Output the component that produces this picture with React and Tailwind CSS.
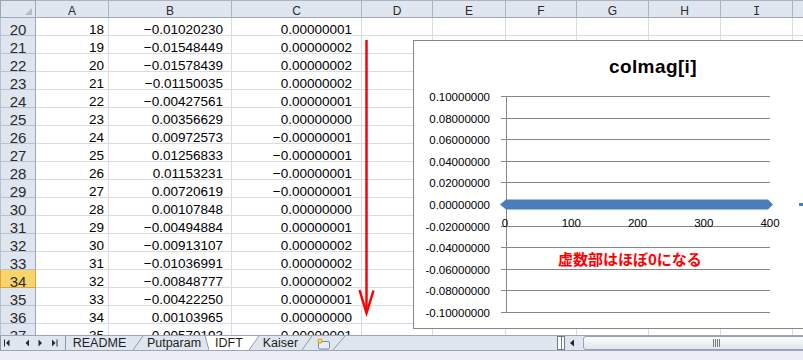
import React from "react";

const ROWS = [
  [20, "18", "−0.01020230", "0.00000001"],
  [21, "19", "−0.01548449", "0.00000002"],
  [22, "20", "−0.01578439", "0.00000002"],
  [23, "21", "−0.01150035", "0.00000002"],
  [24, "22", "−0.00427561", "0.00000001"],
  [25, "23", "0.00356629", "0.00000000"],
  [26, "24", "0.00972573", "−0.00000001"],
  [27, "25", "0.01256833", "−0.00000001"],
  [28, "26", "0.01153231", "−0.00000001"],
  [29, "27", "0.00720619", "−0.00000001"],
  [30, "28", "0.00107848", "0.00000000"],
  [31, "29", "−0.00494884", "0.00000001"],
  [32, "30", "−0.00913107", "0.00000002"],
  [33, "31", "−0.01036991", "0.00000002"],
  [34, "32", "−0.00848777", "0.00000002"],
  [35, "33", "−0.00422250", "0.00000001"],
  [36, "34", "0.00103965", "0.00000000"],
  [37, "35", "0.00570193", "−0.00000001"],
];

const HEAD = [
  ["A", "w-[73px]"],
  ["B", "w-[123px]"],
  ["C", "w-[130px]"],
  ["D", "w-[71px]"],
  ["E", "w-[73px]"],
  ["F", "w-[71px]"],
  ["G", "w-[72px]"],
  ["H", "w-[72px]"],
  ["I", "w-[72px]"],
  ["J", "w-[72px]"],
];

const EMPTY = ["w-[71px]", "w-[73px]", "w-[71px]", "w-[72px]", "w-[72px]", "w-[72px]", "w-[72px]"];

const YL = [
  "0.10000000",
  "0.08000000",
  "0.06000000",
  "0.04000000",
  "0.02000000",
  "0.00000000",
  "-0.02000000",
  "-0.04000000",
  "-0.06000000",
  "-0.08000000",
  "-0.10000000",
];
const gy = (i) => Math.round(96 + i * 21.6) - 41 + 0.5;

function Slant({ fill }) {
  return (
    <svg width="10" height="14" className="shrink-0 block">
      {fill === "left" && <polygon points="0,0 10,0 0,14" fill="#ffffff" />}
      <line x1="0" y1="14" x2="10" y2="0" stroke="#8e99a8" strokeWidth="1" />
    </svg>
  );
}

function Chart() {
  return (
    <div className="absolute left-[413px] top-[40px] w-[480px] h-[289px] border border-[#868686] bg-white">
      <svg width="478" height="287" className="absolute left-0 top-0 block">
        {YL.map((t, i) => (
          <g key={t}>
            <line x1="87" x2="356" y1={gy(i)} y2={gy(i)} stroke="#868686" strokeWidth="1" />
            <text
              x="76"
              y={gy(i) + 4.5}
              textAnchor="end"
              fontSize="11.5"
              fontFamily="Liberation Sans, Arial, sans-serif"
              fill="#000"
            >
              {t}
            </text>
          </g>
        ))}
        <line x1="92.5" x2="92.5" y1={gy(0)} y2={gy(10)} stroke="#868686" strokeWidth="1" />
        <polygon
          points="86,163.5 92,158.5 354,158.5 359,163.5 354,168.5 92,168.5"
          fill="#4a7ebb"
        />
        <rect x="385" y="162" width="4" height="3" fill="#4a7ebb" />
        {[["0", 91], ["100", 157.25], ["200", 223.5], ["300", 289.75], ["400", 356]].map(([t, x]) => (
          <text
            key={t}
            x={x}
            y="186"
            textAnchor="middle"
            fontSize="11.5"
            fontFamily="Liberation Sans, Arial, sans-serif"
            fill="#000"
          >
            {t}
          </text>
        ))}
      </svg>
      <div className="absolute left-0 right-0 top-[16px] text-center text-[19px] leading-[19px] font-bold tracking-[0.4px] text-black">
        colmag[i]
      </div>
      <div className="absolute left-[144px] top-[210px] whitespace-nowrap text-[15px] leading-[15px] font-bold text-[#ff0000] font-['Noto_Sans_CJK_JP',sans-serif]">
        虚数部はほぼ0になる
      </div>
    </div>
  );
}

export default function App() {
  return (
    <div className="relative w-[803px] h-[360px] overflow-hidden bg-white font-['Liberation_Sans',Arial,sans-serif] text-black">
      <div className="h-[335px] overflow-hidden">
        {/* column header */}
        <div className="flex">
          <div className="w-[36px] h-[18px] shrink-0 border-t border-l border-b border-r border-[#9ba7b7] bg-[#dfe6ef]">
            <svg width="34" height="16" className="block">
              <polygon points="31,7 31,14 24,14" fill="#b3bcc8" />
            </svg>
          </div>
          {HEAD.map(([l, w]) => (
            <div
              key={l}
              className={`${w} h-[18px] shrink-0 border-t border-r border-b border-[#a9b5c4] border-b-[#9ba7b7] bg-[#dfe6ef] text-center text-[12px] leading-[12px] pt-[4px] text-[#2b2b2b]`}
            >
              {l === "I" ? <span className="font-['Liberation_Mono',monospace]">I</span> : l}
            </div>
          ))}
        </div>
        {ROWS.map(([r, a, b, c]) => (
          <div key={r} className="flex">
            <div
              className={
                r === 34
                  ? "w-[36px] h-[18px] shrink-0 border-l border-r border-b border-[#e2a13a] bg-[#f8d56c] text-center text-[15px] leading-[10px] pt-[7px] text-[#2b2b2b]"
                  : "w-[36px] h-[18px] shrink-0 border-l border-r border-b border-[#b6c2d1] border-r-[#9ba7b7] bg-[#dfe6ef] text-center text-[15px] leading-[10px] pt-[7px] text-[#2b2b2b]"
              }
            >
              {r}
            </div>
            <div className="w-[73px] h-[18px] shrink-0 border-r border-b border-[#d9dce1] text-right text-[13.5px] leading-[10px] pt-[7px] pr-[4px]">
              {a}
            </div>
            <div className="w-[123px] h-[18px] shrink-0 border-r border-b border-[#d9dce1] text-right text-[13.5px] leading-[10px] pt-[7px] pr-[8px]">
              {b}
            </div>
            <div className="w-[130px] h-[18px] shrink-0 border-r border-b border-[#d9dce1] text-right text-[13.5px] leading-[10px] pt-[7px] pr-[9px]">
              {c}
            </div>
            {EMPTY.map((w, i) => (
              <div key={i} className={`${w} h-[18px] shrink-0 border-r border-b border-[#d9dce1]`} />
            ))}
          </div>
        ))}
      </div>

      {/* tab bar */}
      <div className="flex h-[16px] border-t border-b border-[#9ba7b7] bg-[#dfe6ef] text-[12.5px] leading-[14px] text-[#1e1e1e] whitespace-nowrap">
        <div className="w-[66px] shrink-0 border-l border-r border-[#8e99a8]">
          <svg width="64" height="14" className="block">
            <rect x="3" y="3.5" width="1" height="7" fill="#2a2a2a" />
            <polygon points="8.5,3.5 5,7 8.5,10.5" fill="#2a2a2a" />
            <polygon points="28,3.5 24.5,7 28,10.5" fill="#2a2a2a" />
            <polygon points="37.5,3.5 41,7 37.5,10.5" fill="#2a2a2a" />
            <polygon points="51,3.5 54.5,7 51,10.5" fill="#2a2a2a" />
            <rect x="55.5" y="3.5" width="1" height="7" fill="#2a2a2a" />
          </svg>
        </div>
        <div className="w-[67px] shrink-0 text-center">README</div>
        <Slant />
        <div className="w-[62px] shrink-0 text-center">Putparam</div>
        <svg width="4" height="14" className="shrink-0 block">
          <polygon points="0,0 4,0 4,14" fill="#ffffff" />
          <line x1="0" y1="0" x2="4" y2="14" stroke="#8e99a8" strokeWidth="1" />
        </svg>
        <div className="w-[40px] shrink-0 text-center bg-white">IDFT</div>
        <Slant fill="left" />
        <div className="w-[43px] shrink-0 text-center">Kaiser</div>
        <Slant />
        <div className="w-[21px] shrink-0 flex items-center justify-center">
          <svg width="16" height="13" className="block">
            <rect x="3.5" y="4.5" width="11" height="7.5" rx="1.5" fill="#e8eff8" stroke="#6a8bb3" strokeWidth="1" />
            <circle cx="5" cy="4" r="2.6" fill="#f2a427" />
            <circle cx="5" cy="4" r="1.1" fill="#fff3c4" />
          </svg>
        </div>
        <svg width="12" height="14" className="shrink-0 block">
          <line x1="0" y1="14" x2="12" y2="0" stroke="#8e99a8" strokeWidth="1" />
        </svg>
        <div className="w-[212px] shrink-0" />
        <div className="w-[8px] h-[14px] shrink-0 border border-[#6f7b8a] bg-white flex justify-center">
          <div className="w-px h-full bg-[#6f7b8a]" />
        </div>
        <div className="w-[18px] shrink-0">
          <svg width="18" height="14" className="block">
            <polygon points="9,3.5 5,7 9,10.5" fill="#222" />
          </svg>
        </div>
        <div className="w-[260px] h-[14px] shrink-0 border border-[#97a3b3] rounded-l-[3px] bg-linear-to-b from-[#fbfcfd] to-[#e1e6ed]">
          <svg width="8" height="8" className="block ml-[129px] mt-[2px]">
            <line x1="0.5" y1="0" x2="0.5" y2="8" stroke="#7a7a7a" />
            <line x1="2.5" y1="0" x2="2.5" y2="8" stroke="#7a7a7a" />
            <line x1="4.5" y1="0" x2="4.5" y2="8" stroke="#7a7a7a" />
            <line x1="6.5" y1="0" x2="6.5" y2="8" stroke="#7a7a7a" />
          </svg>
        </div>
      </div>
      <div className="h-[9px] bg-[#ecedf5]" />

      <Chart />

      <svg width="25" height="280" className="absolute left-[355px] top-[38px] block">
        <line x1="11.5" y1="2" x2="11.5" y2="272" stroke="#ff0000" strokeWidth="2.5" />
        <polyline points="4.5,252 11.5,275 18.5,252.5" fill="none" stroke="#ff0000" strokeWidth="2.5" />
      </svg>
    </div>
  );
}
